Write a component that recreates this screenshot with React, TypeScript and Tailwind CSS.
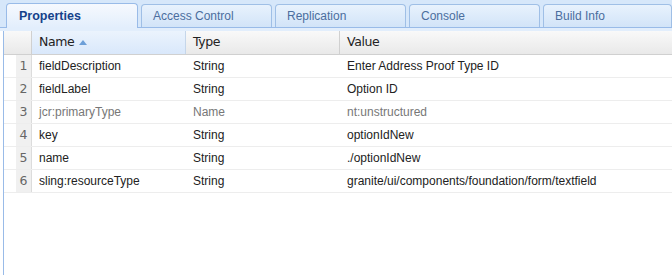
const tabs = ["Properties", "Access Control", "Replication", "Console", "Build Info"];

const rows = [
  { name: "fieldDescription", type: "String", value: "Enter Address Proof Type ID" },
  { name: "fieldLabel", type: "String", value: "Option ID" },
  { name: "jcr:primaryType", type: "Name", value: "nt:unstructured", muted: true },
  { name: "key", type: "String", value: "optionIdNew" },
  { name: "name", type: "String", value: "./optionIdNew" },
  { name: "sling:resourceType", type: "String", value: "granite/ui/components/foundation/form/textfield" },
];

export default function App() {
  return (
    <div className="w-[672px] h-[275px] bg-white overflow-hidden flex flex-col font-['Liberation_Sans',Arial,sans-serif]">
      {/* Tab strip */}
      <div className="bg-[#d6e7fa] flex flex-col">
        <div className="flex items-end gap-[3px] pl-[6px] pt-[4px] h-[27px]">
          {tabs.map((t, i) =>
            i === 0 ? (
              <div
                key={t}
                className="relative z-10 w-[132px] h-[25px] -mb-[1px] rounded-t-[4px] border border-b-0 border-[#99bbe8] bg-gradient-to-b from-[#f6f9fe] to-[#e2eefc] pl-[12px] flex items-center text-[12.5px] font-bold text-[#15428b]"
              >
                {t}
              </div>
            ) : (
              <div
                key={t}
                className={`${i === 4 ? "flex-1" : "w-[131px]"} h-[23px] rounded-t-[4px] border border-b-0 border-[#9fbfe6] bg-gradient-to-b from-[#e8f2fd] to-[#d2e4f8] pl-[11px] flex items-center text-[12px] text-[#4b6e9e]`}
              >
                {t}
              </div>
            )
          )}
        </div>
        <div className="h-[4px] border-t border-[#99bbe8] bg-[#e2eefc]" />
      </div>

      {/* Grid */}
      <div className="flex-1 ml-[3px] border-l border-[#99bbe8] flex flex-col">
        <div className="flex h-[24px] border-b border-[#d0d0d0] text-[12.5px] text-[#222] font-['DejaVu_Sans',sans-serif] tracking-[-0.4px]">
          <div className="w-[28px] bg-gradient-to-b from-[#f9f9f9] to-[#e9e9e9] border-r border-[#d0d0d0]" />
          <div className="w-[154px] bg-gradient-to-b from-[#ebf3fd] to-[#d9e8fb] border-r border-[#c5d6ea] pl-[7px] flex items-center gap-[5px]">
            Name
            <svg width="8" height="5" viewBox="0 0 8 5">
              <path d="M0 5 L4 0 L8 5 Z" fill="#6d9fd8" />
            </svg>
          </div>
          <div className="w-[154px] bg-gradient-to-b from-[#f9f9f9] to-[#e9e9e9] border-r border-[#d0d0d0] pl-[7px] flex items-center">
            Type
          </div>
          <div className="flex-1 bg-gradient-to-b from-[#f9f9f9] to-[#e9e9e9] pl-[7px] flex items-center">
            Value
          </div>
        </div>

        {rows.map((r, i) => (
          <div
            key={r.name}
            className={`flex h-[23px] border-b border-[#ededed] text-[12px] ${r.muted ? "text-[#777]" : "text-[#222]"}`}
          >
            <div className="w-[28px] pl-[12px] flex">
              <div className="flex-1 bg-[#f0f0f0] border-r border-[#dcdcdc] flex items-center justify-center text-[12.5px] text-[#666] font-['DejaVu_Sans',sans-serif]">
                {i + 1}
              </div>
            </div>
            <div className="w-[154px] pl-[7px] flex items-center">{r.name}</div>
            <div className="w-[154px] pl-[7px] flex items-center">{r.type}</div>
            <div className="flex-1 pl-[7px] flex items-center">{r.value}</div>
          </div>
        ))}
      </div>
    </div>
  );
}
